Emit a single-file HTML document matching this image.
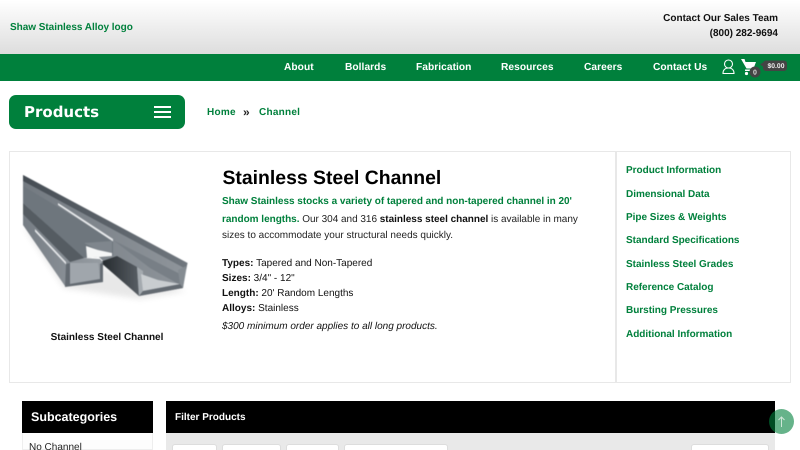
<!DOCTYPE html>
<html style="width:800px;height:450px;overflow:hidden"><head><meta charset="utf-8"><style>
html,body{margin:0;padding:0;background:#fff}
body{width:800px;height:450px;overflow:hidden;position:relative;font-family:"Liberation Sans",Arial,sans-serif;color:#000;text-rendering:geometricPrecision}
#w{position:absolute;left:0;top:0;width:800px;height:450px;overflow:hidden;filter:blur(.25px)}
.a{position:absolute;white-space:nowrap}
.g{color:#00803c;font-weight:bold}
.n{color:#fff;font-weight:bold;font-size:10.2px;top:61px;line-height:14px;letter-spacing:.05px}
.s{left:626px;font-size:10px;line-height:14px;letter-spacing:-.02px}
.t{left:222px;font-size:10px;line-height:15px;color:#111}
.b{position:absolute;top:444px;height:10px;background:#fff;border-radius:3px;border:1px solid #ddd;box-sizing:border-box}
</style></head><body><div id="w">
<div class="a" style="left:0;top:0;width:800px;height:54px;background:linear-gradient(#fff,#ddd)"></div>
<div class="a g" style="left:10px;top:21px;font-size:10px;line-height:14px;letter-spacing:-.03px">Shaw Stainless Alloy logo</div>
<div class="a" style="right:22px;top:10.500px;font-size:10px;line-height:15px;font-weight:bold;text-align:right;color:#111">Contact Our Sales Team</div>
<div class="a" style="right:22px;top:25.500px;font-size:10px;line-height:15px;font-weight:bold;text-align:right;color:#111">(800) 282-9694</div>
<div class="a" style="left:0;top:54px;width:800px;height:27px;background:#00803c"></div>
<div class="a n" style="left:284px">About</div>
<div class="a n" style="left:345px">Bollards</div>
<div class="a n" style="left:416px">Fabrication</div>
<div class="a n" style="left:501px">Resources</div>
<div class="a n" style="left:584px">Careers</div>
<div class="a n" style="left:653px">Contact Us</div>
<svg class="a" style="left:720px;top:56px" width="80" height="26" viewBox="0 0 80 26">
<circle cx="8.500" cy="8" r="4" fill="none" stroke="#fff" stroke-width="1.100"/>
<path d="M3 17.500c0-3.500 2.200-5.500 5.500-5.500s5.500 2 5.500 5.500z" fill="none" stroke="#fff" stroke-width="1.100"/>
<path d="M21 3h3.500l1 3h10.500l-2.500 6.500h-7z" fill="#fff"/>
<path d="M25 13.500h8v1.500h-8z" fill="#fff"/>
<circle cx="26.500" cy="17.500" r="1.600" fill="#fff"/>
<circle cx="35" cy="16" r="5.500" fill="#444"/>
<text x="35" y="18.500" font-size="7" font-weight="bold" fill="#ddd" text-anchor="middle" font-family="Liberation Sans">0</text>
<path d="M46 4.500h18a3 3 0 0 1 3 3v4.500a3 3 0 0 1-3 3H46a3 3 0 0 1-3-3v-1.500l-3-2 3-2V7.500a3 3 0 0 1 3-3z" fill="#444"/>
<text x="56" y="12" font-size="6.800" font-weight="bold" fill="#eee" text-anchor="middle" font-family="Liberation Sans">$0.00</text>
</svg>
<div class="a" style="left:9px;top:95px;width:176px;height:34px;background:#00803c;border-radius:7px"></div>
<div class="a" style="left:24px;top:102.500px;font-family:'DejaVu Sans',sans-serif;font-weight:bold;font-size:15px;line-height:19px;color:#fff">Products</div>
<div class="a" style="left:154px;top:106px;width:17px;height:1.500px;background:#fff"></div>
<div class="a" style="left:154px;top:111px;width:17px;height:1.500px;background:#fff"></div>
<div class="a" style="left:154px;top:116px;width:17px;height:1.500px;background:#fff"></div>
<div class="a g" style="left:207px;top:105.500px;font-size:10px;line-height:14px;letter-spacing:.25px">Home</div>
<div class="a" style="left:243px;top:104.500px;font-size:12px;line-height:15px;color:#222;font-weight:bold">»</div>
<div class="a g" style="left:259px;top:105.500px;font-size:10px;line-height:14px;letter-spacing:.25px">Channel</div>
<div class="a" style="left:9px;top:151px;width:782px;height:232px;box-sizing:border-box;border:1px solid #e8e8e8"></div>
<div class="a" style="left:615px;top:151px;width:2px;height:232px;background:#e8e8e8"></div>
<svg class="a" style="left:15px;top:165px;filter:blur(.6px)" width="180" height="140" viewBox="15 165 180 140">
<defs>
<linearGradient id="g0" x1="0" y1="0" x2="1" y2="0"><stop offset="0" stop-color="#454c53"/><stop offset="1" stop-color="#70777e"/></linearGradient>
<linearGradient id="g2" x1="0" y1="0" x2="1" y2="0"><stop offset="0" stop-color="#737a81"/><stop offset="1" stop-color="#8f959b"/></linearGradient>
<linearGradient id="g3" x1="0" y1="0" x2="1" y2="0"><stop offset="0" stop-color="#767d84"/><stop offset="1" stop-color="#979da3"/></linearGradient>
<linearGradient id="d" x1="0" y1="0" x2="1" y2="0"><stop offset="0" stop-color="#22272b"/><stop offset="1" stop-color="#585e64"/></linearGradient>
<filter id="sh" x="-20%" y="-20%" width="140%" height="140%"><feGaussianBlur stdDeviation="3"/></filter>
</defs>
<path d="M24 228L64 288 140 299 186 291 120 275z" fill="#ccc" filter="url(#sh)" opacity=".45"/>
<path d="M23 175L187.500 263 183 288 139 296 100 258 23 197z" fill="url(#g2)"/>
<path d="M23 175L187.500 263 186 269 23 181z" fill="url(#g0)"/>
<path d="M113 240L182 275 182 286 150 268z" fill="#787f86"/>
<path d="M100 262L117 256 137 267 139 296z" fill="url(#d)"/>
<path d="M137 267L143 271 143 291 139 296z" fill="#a4aaaf"/>
<path d="M141 274L158 280 180 284 143 291z" fill="#c9cdd0"/>
<path d="M143 291L181 284 183 288 139 296z" fill="#636a71"/>
<path d="M178 270L186 266 183 288 180 284z" fill="#858c92"/>
<path d="M23 186L113 240 113 256 85 258 83 258 23 203z" fill="#6e767d"/>
<path d="M58 203L113 239 113 241.500 58 205z" fill="#e8eaec"/>
<path d="M84 243L112 241 112 253 98 250z" fill="#7f868d"/>
<path d="M86 246L98 250 112 253 112 256 87 258z" fill="#f5f6f6"/>
<path d="M23 203L83 258 100 259 103 262 103 282 65 286 23 225z" fill="url(#g3)"/>
<path d="M23 203L84 258 70 262 23 214z" fill="#555c62"/>
<path d="M35 229L66 262 66 264.500 35 231.500z" fill="#e6e8ea"/>
<path d="M70 263L98 263 100 279 70 284z" fill="#a0a6ac"/>
<path d="M66 264L70 263 70 284 100 279 100 264 103 262 103 282 65 287z" fill="#636a71"/>
</svg>
<div class="a" style="left:9px;top:331px;width:196px;text-align:center;font-size:10px;line-height:14px;font-weight:bold;color:#111">Stainless Steel Channel</div>
<div class="a" style="left:222.500px;top:164.500px;font-size:19.400px;line-height:26px;font-weight:bold;color:#000">Stainless Steel Channel</div>
<div class="a g" style="left:222px;top:193.500px;font-size:10px;line-height:15px;letter-spacing:-.02px">Shaw Stainless stocks a variety of tapered and non-tapered channel in 20'</div>
<div class="a" style="left:222px;top:211.500px;font-size:10px;line-height:15px;color:#222;letter-spacing:-.02px"><span class="g">random lengths.</span> Our 304 and 316 <b style="color:#111">stainless steel channel</b> is available in many</div>
<div class="a" style="left:222px;top:227.500px;font-size:10px;line-height:15px;color:#222">sizes to accommodate your structural needs quickly.</div>
<div class="a t" style="top:255.500px"><b>Types:</b> Tapered and Non-Tapered</div>
<div class="a t" style="top:270.500px"><b>Sizes:</b> 3/4" - 12"</div>
<div class="a t" style="top:285.500px"><b>Length:</b> 20' Random Lengths</div>
<div class="a t" style="top:300.500px"><b>Alloys:</b> Stainless</div>
<div class="a t" style="top:318.500px"><i>$300 minimum order applies to all long products.</i></div>
<div class="a s g" style="top:163.500px">Product Information</div>
<div class="a s g" style="top:187.500px">Dimensional Data</div>
<div class="a s g" style="top:210.500px">Pipe Sizes &amp; Weights</div>
<div class="a s g" style="top:234px">Standard Specifications</div>
<div class="a s g" style="top:257.500px">Stainless Steel Grades</div>
<div class="a s g" style="top:280.500px">Reference Catalog</div>
<div class="a s g" style="top:304px">Bursting Pressures</div>
<div class="a s g" style="top:327.500px">Additional Information</div>
<div class="a" style="left:22px;top:401px;width:131px;height:32px;background:#000"></div>
<div class="a" style="left:22px;top:433px;width:131px;height:17px;box-sizing:border-box;border:1px solid #eee;border-top:0;background:#fdfdfd"></div>
<div class="a" style="left:31px;top:409px;font-size:12.500px;line-height:16px;font-weight:bold;color:#fff">Subcategories</div>
<div class="a" style="left:29px;top:440.500px;font-size:10px;line-height:14px;color:#222">No Channel</div>
<div class="a" style="left:166px;top:401px;width:609px;height:32px;background:#000"></div>
<div class="a" style="left:166px;top:433px;width:609px;height:17px;background:#e9e9e9"></div>
<div class="a" style="left:175px;top:411px;font-size:10px;line-height:14px;font-weight:bold;color:#fff">Filter Products</div>
<div class="b" style="left:172px;width:45px"></div>
<div class="b" style="left:222px;width:59px"></div>
<div class="b" style="left:286px;width:53px"></div>
<div class="b" style="left:344px;width:104px"></div>
<div class="b" style="left:691px;width:78px"></div>
<div class="a" style="left:769px;top:409px;width:25px;height:25px;border-radius:50%;background:rgba(0,128,60,.6)"></div>
<svg class="a" style="left:769px;top:409px" width="25" height="25" viewBox="0 0 25 25"><path d="M12.500 18V8M9.500 11l3-3 3 3" fill="none" stroke="#cfe6d8" stroke-width="1"/></svg>
</div></body></html>
